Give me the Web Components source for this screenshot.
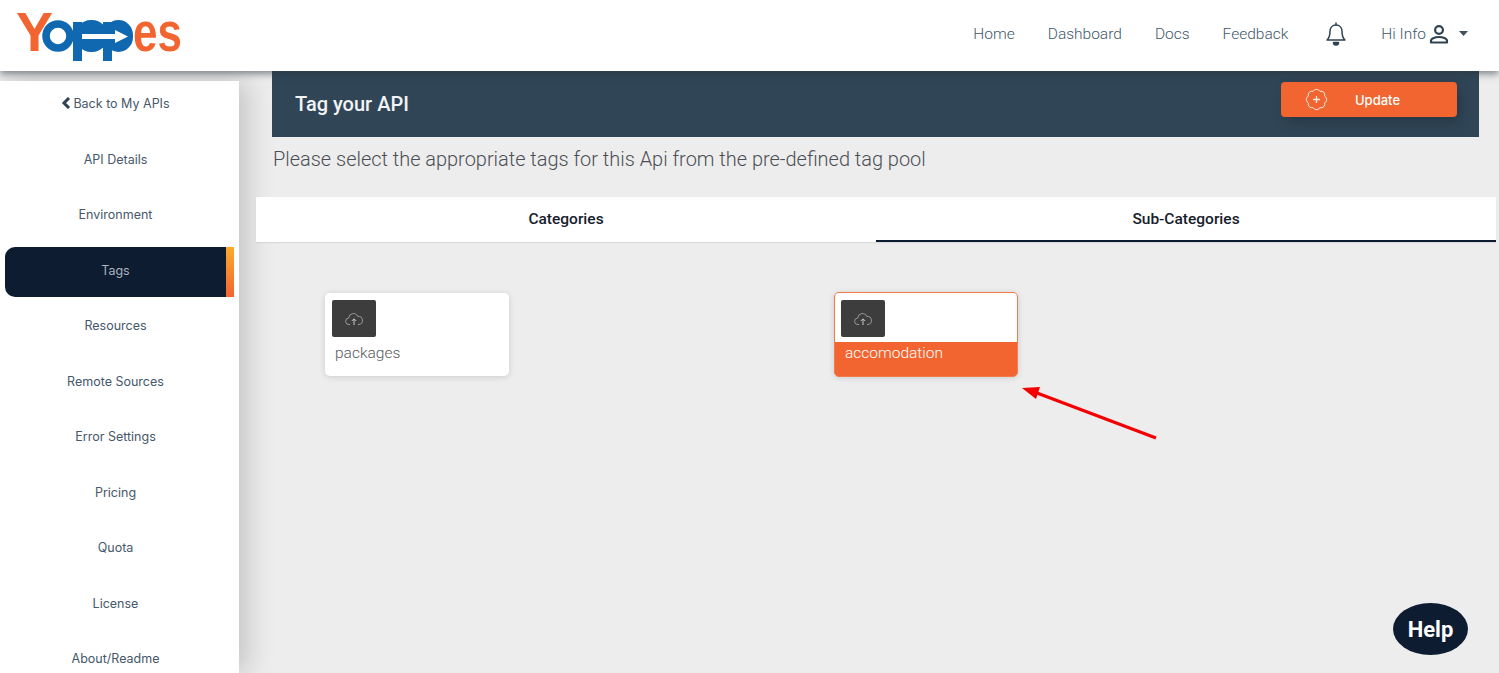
<!DOCTYPE html>
<html lang="en">
<head>
<meta charset="utf-8">
<title>Tag your API</title>
<style>
  html, body { margin: 0; height: 673px; overflow: hidden; background: #ededed; font-family: Roboto, "Liberation Sans", sans-serif; }
  .layout { display: flex; height: 602px; align-items: flex-start; }
</style>
</head>
<body>
<yp-header></yp-header>
<div class="layout">
  <yp-sidebar></yp-sidebar>
  <yp-main></yp-main>
</div>
<yp-arrow></yp-arrow>
<yp-help>Help</yp-help>

<script>
class YpHeader extends HTMLElement {
  constructor() {
    super();
    this.attachShadow({mode: "open"});
    this.shadowRoot.innerHTML = `
    <style>
      :host { display: flex; position: relative; z-index: 3; height: 71px; background: #fff; align-items: center; box-shadow: 0 3px 7px rgba(40, 50, 60, .55); }
      .logo { display: block; width: 200px; height: 70px; flex: none; }
      .logo text { font-family: "Liberation Sans", sans-serif; font-weight: 700; font-size: 56px; fill: #f26430; }
      nav { margin-left: auto; display: flex; align-items: center; font-size: 15.500px; font-weight: 300; color: #42586a; padding-right: 31px; height: 67px; margin-bottom: 4px; }
      nav a { margin-right: 33px; white-space: nowrap; }
      .bell { margin: 0 34px 0 4px; display: block; }
      .user { display: flex; align-items: center; }
      .user svg { display: block; }
      .user .me { margin-left: 2px; }
      .user .caret { margin-left: 9px; }
    </style>
    <svg class="logo" viewBox="0 0 200 70" role="img" aria-label="Yappes">
      <text x="16" y="50" textLength="37" lengthAdjust="spacingAndGlyphs">Y</text>
      <circle cx="58" cy="35" r="12" fill="none" stroke="#0f68b0" stroke-width="7.500"/>
      <g fill="#0f68b0">
        <rect x="75" y="19" width="33" height="32" rx="16"/>
        <rect x="104" y="19" width="29" height="32" rx="15"/>
        <rect x="73" y="21" width="9" height="39"/>
        <rect x="103" y="21" width="9" height="39"/>
      </g>
      <path d="M82 33H115V29L128 35.500 115 42V38H82Z" fill="#fff"/>
      <text x="133" y="50" textLength="49" lengthAdjust="spacingAndGlyphs">es</text>
    </svg>
    <nav>
      <a>Home</a><a>Dashboard</a><a>Docs</a><a>Feedback</a>
      <svg class="bell" width="22" height="24" viewBox="0 0 22 24" fill="none" stroke="#2f4252" stroke-width="1.500" stroke-linejoin="round">
        <path d="M11 3c-3.800 0-6 3-6 6.500 0 4.500-1 6.800-3 8.500h18c-2-1.700-3-4-3-8.500C17 6 14.800 3 11 3Z"/>
        <path d="M11 1v2" stroke-linecap="round"/>
        <path d="M8.500 20.500a2.500 2.500 0 0 0 5 0Z" fill="#2f4252"/>
      </svg>
      <div class="user">
        <span>Hi Info</span>
        <svg class="me" width="22" height="22" viewBox="0 0 22 22" fill="none" stroke="#2f4252" stroke-width="2.200">
          <circle cx="11" cy="7" r="3.900"/>
          <path d="M3 19.500v-1.700c0-2.500 4.500-3.800 8-3.800s8 1.300 8 3.800v1.700Z" stroke-linejoin="round"/>
        </svg>
        <svg class="caret" width="9" height="5" viewBox="0 0 9 5"><path d="M0 0h9L4.500 5Z" fill="#42505c"/></svg>
      </div>
    </nav>`;
  }
}

class YpNavItem extends HTMLElement {
  constructor() {
    super();
    this.attachShadow({mode: "open"});
    this.shadowRoot.innerHTML = `
    <style>
      :host { display: flex; height: 50px; margin: 0 5px 5.550px; width: 229px; box-sizing: border-box; align-items: center; justify-content: center; padding: 0 8px 4px 0; font-size: 12.500px; color: #46586a; border-radius: 10px 0 0 10px; white-space: nowrap; }
      :host([active]) { background: #0d1c30; color: #a9b4bf; position: relative; }
      :host([active])::after { content: ""; position: absolute; right: 0; top: 0; bottom: 0; width: 8px; background: linear-gradient(#fbab2c, #f26430); }
    </style>
    <slot></slot>`;
  }
}

class YpSidebar extends HTMLElement {
  constructor() {
    super();
    this.attachShadow({mode: "open"});
    const items = ["API Details", "Environment", "Tags", "Resources", "Remote Sources", "Error Settings", "Pricing", "Quota", "License", "About/Readme"];
    this.shadowRoot.innerHTML = `
    <style>
      :host { display: block; flex: none; width: 239px; height: 592px; margin-top: 10px; background: #fff; box-shadow: 8px 0 26px rgba(0, 0, 0, .18); font-family: Inter, "Liberation Sans", sans-serif; overflow: hidden; position: relative; z-index: 1; }
      .back { display: flex; height: 44px; align-items: center; justify-content: center; margin-bottom: 11px; padding-right: 8px; font-size: 12.500px; color: #46586a; }
      .back svg { margin-right: 2px; }
    </style>
    <div class="back">
      <svg width="10" height="12" viewBox="0 0 10 12"><path d="M8 1 3 6l5 5" fill="none" stroke="#2f4252" stroke-width="3"/></svg>
      Back to My APIs
    </div>
    ${items.map(i => `<yp-nav-item${i === "Tags" ? " active" : ""}>${i}</yp-nav-item>`).join("")}`;
  }
}

class YpBanner extends HTMLElement {
  constructor() {
    super();
    this.attachShadow({mode: "open"});
    this.shadowRoot.innerHTML = `
    <style>
      :host { display: flex; height: 66px; margin: 0 17px 0 16px; padding: 0 22px 0 23px; background: #304657; align-items: center; justify-content: space-between; color: #fff; }
      h1 { margin: 0; font-size: 20px; font-weight: 500; color: #f2f4f6; }
      button { display: flex; align-items: center; width: 176px; height: 35px; margin-bottom: 10px; padding: 1px 0 0 24px; border: 0; border-radius: 4px; background: #f26430; color: #fff; font: 500 13px Inter, "Liberation Sans", sans-serif; box-shadow: 4px 6px 14px rgba(0, 0, 0, .2); }
      svg { display: block; margin-right: 27px; }
    </style>
    <h1><slot></slot></h1>
    <button>
      <svg width="23" height="23" viewBox="0 0 23 23" fill="none" stroke="#ffe9df" stroke-width="1">
        <path d="M14.870 3.370A3.800 3.800 0 0 1 19.630 8.130 3.800 3.800 0 0 1 19.630 14.870 3.800 3.800 0 0 1 14.870 19.630 3.800 3.800 0 0 1 8.130 19.630 3.800 3.800 0 0 1 3.370 14.870 3.800 3.800 0 0 1 3.370 8.130 3.800 3.800 0 0 1 8.130 3.370 3.800 3.800 0 0 1 14.870 3.370Z" stroke-linejoin="round"/>
        <path d="M11.500 8v7M8 11.500h7" stroke-width="1.300"/>
      </svg>
      Update
    </button>`;
  }
}

class YpTabs extends HTMLElement {
  constructor() {
    super();
    this.attachShadow({mode: "open"});
    this.shadowRoot.innerHTML = `
    <style>
      :host { display: grid; grid-template-columns: 620px 620px; height: 45px; background: #fff; box-shadow: 0 1px 1px rgba(0, 0, 0, .08); font-size: 15.500px; font-weight: 500; color: #16202b; }
      div { display: flex; align-items: center; justify-content: center; box-sizing: border-box; padding-bottom: 1px; }
      .on { border-bottom: 2px solid #0d1c30; padding-bottom: 0; }
    </style>
    <div>Categories</div>
    <div class="on">Sub-Categories</div>`;
  }
}

class YpTagCard extends HTMLElement {
  constructor() {
    super();
    this.attachShadow({mode: "open"});
    this.shadowRoot.innerHTML = `
    <style>
      :host { display: flex; flex-direction: column; box-sizing: border-box; width: 184px; height: 83px; border-radius: 5px; overflow: hidden; background: #fff; box-shadow: 0 1px 6px rgba(0, 0, 0, .14); font-size: 15.500px; font-weight: 300; color: #55595e; }
      :host([selected]) { border: 1px solid #f47a4b; background: #f26430; color: #fff; margin: -1px 0 0 -1px; height: 85px; }
      .top { flex: none; height: 49px; padding: 7px 0 0 7px; box-sizing: border-box; background: #fff; }
      :host([selected]) .top { padding: 7px 0 0 6px; }
      .thumb { display: flex; width: 44px; height: 37px; align-items: center; justify-content: center; background: #3d3d3d; border-radius: 2px; }
      .name { padding: 1px 10px 0; line-height: 20px; }
      :host([selected]) .name { padding: 1px 9px 0 10px; }
    </style>
    <div class="top">
      <div class="thumb">
        <svg width="18" height="14" viewBox="0 0 18 14" fill="none" stroke="#9a9a9a" stroke-width="1">
          <path d="M5 12.500H4a3.200 3.200 0 0 1-.4-6.400A4.800 4.800 0 0 1 12.800 4.500 4 4 0 0 1 14 12.500h-1"/>
          <path d="M9 13V7M6.800 9 9 6.800 11.200 9" stroke="#c9c9c9"/>
        </svg>
      </div>
    </div>
    <div class="name"><slot></slot></div>`;
  }
}

class YpMain extends HTMLElement {
  constructor() {
    super();
    this.attachShadow({mode: "open"});
    this.shadowRoot.innerHTML = `
    <style>
      :host { display: block; flex: 1; min-width: 0; padding: 0 3px 0 17px; position: relative; z-index: 2; }
      p { margin: 9px 0 0 17px; height: 51px; box-sizing: border-box; font-size: 19.950px; line-height: 27px; font-weight: 300; color: #4b4f54; white-space: nowrap; }
      .cards { display: grid; grid-template-columns: 510px 184px; padding: 51px 0 0 69px; }
    </style>
    <yp-banner>Tag your API</yp-banner>
    <p>Please select the appropriate tags for this Api from the pre-defined tag pool</p>
    <yp-tabs></yp-tabs>
    <div class="cards">
      <yp-tag-card>packages</yp-tag-card>
      <yp-tag-card selected>accomodation</yp-tag-card>
    </div>`;
  }
}

class YpArrow extends HTMLElement {
  constructor() {
    super();
    this.attachShadow({mode: "open"});
    this.shadowRoot.innerHTML = `
    <style>
      :host { display: block; position: absolute; left: 1015px; top: 380px; width: 150px; height: 65px; z-index: 4; }
      svg { display: block; }
    </style>
    <svg width="150" height="65" viewBox="0 0 150 65">
      <path d="M141 58 22 13" stroke="#f40000" stroke-width="3.200"/>
      <path d="M7 8 25 7 21 19Z" fill="#f40000"/>
    </svg>`;
  }
}

class YpHelp extends HTMLElement {
  constructor() {
    super();
    this.attachShadow({mode: "open"});
    this.shadowRoot.innerHTML = `
    <style>
      :host { display: flex; position: fixed; left: 1393px; top: 603px; width: 75px; height: 52px; border-radius: 50%; align-items: center; justify-content: center; background: #0d1c30; color: #fff; font-size: 22px; font-weight: 700; z-index: 5; }
    </style>
    <slot></slot>`;
  }
}

customElements.define("yp-header", YpHeader);
customElements.define("yp-nav-item", YpNavItem);
customElements.define("yp-sidebar", YpSidebar);
customElements.define("yp-banner", YpBanner);
customElements.define("yp-tabs", YpTabs);
customElements.define("yp-tag-card", YpTagCard);
customElements.define("yp-main", YpMain);
customElements.define("yp-arrow", YpArrow);
customElements.define("yp-help", YpHelp);
</script>
</body>
</html>
